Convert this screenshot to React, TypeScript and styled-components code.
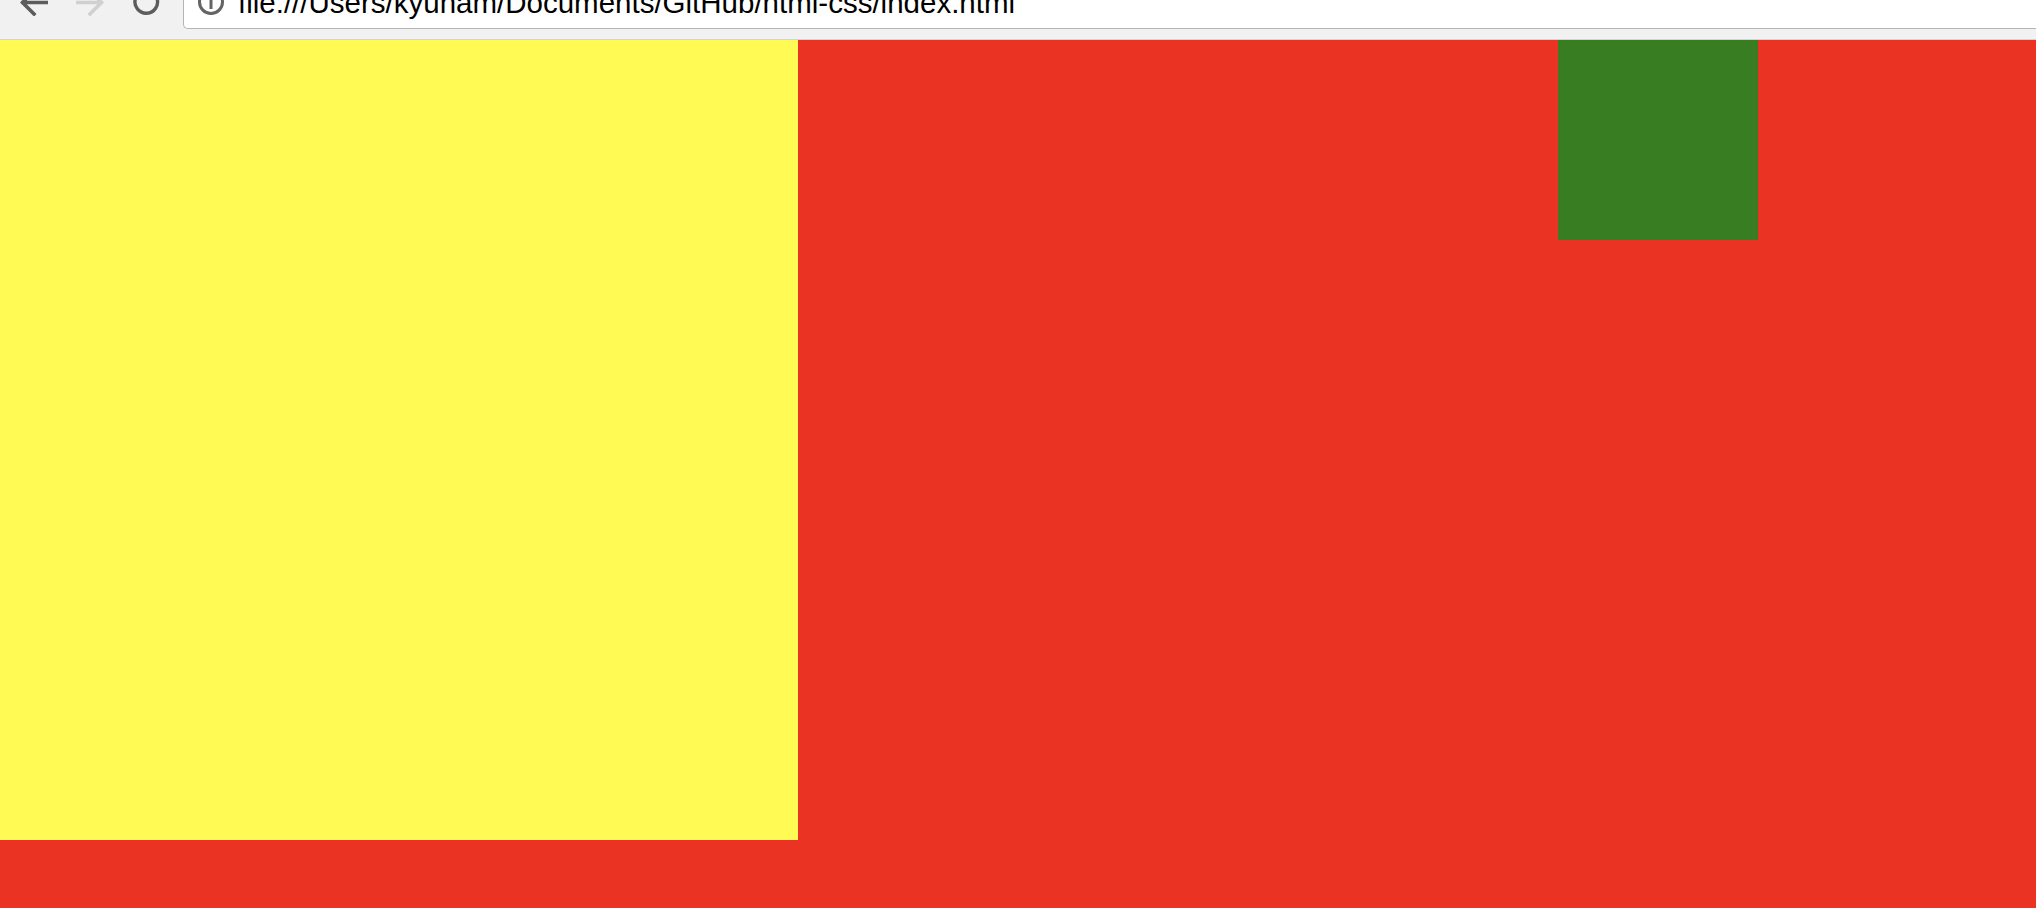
import React from 'react';
import styled, { createGlobalStyle } from 'styled-components';

const GlobalStyle = createGlobalStyle`
  html,
  body {
    margin: 0;
    padding: 0;
    background: #ea3323;
    overflow: hidden;
  }

  #root {
    width: 2036px;
    height: 908px;
  }
`;

const Window = styled.div`
  display: flex;
  flex-direction: column;
  height: 100%;
`;

const Toolbar = styled.header`
  height: 39px;
  flex-shrink: 0;
  overflow: hidden;
  display: flex;
  align-items: flex-end;
  background: #f1f1f1;
  border-bottom: 1px solid #d3d3d3;
`;

const NavRow = styled.div`
  height: 75px;
  flex: 1;
  display: flex;
  align-items: center;
  padding-left: 20px;
`;

const NavButtons = styled.div`
  display: flex;
  align-items: center;
  gap: 28px;
  margin-right: 23px;
`;

const NavIcon = styled.svg<{ $tone: string }>`
  width: 28px;
  height: 28px;
  flex-shrink: 0;
  color: ${(p) => p.$tone};
`;

const UrlBox = styled.div`
  flex: 1;
  height: 55px;
  box-sizing: border-box;
  display: flex;
  align-items: center;
  gap: 13px;
  padding-left: 13px;
  background: #fff;
  border: 1px solid #b4b4b4;
  border-right: none;
  border-radius: 0 0 0 5px;
`;

const UrlText = styled.span`
  margin-top: 3px;
  font-family: 'Liberation Sans', Arial, sans-serif;
  font-size: 29.5px;
  line-height: 34px;
  color: #000;
  white-space: nowrap;
`;

const Page = styled.main`
  flex: 1;
  display: flex;
  align-items: flex-start;
  gap: 760px;
  background: #ea3323;
`;

const Block = styled.div<{ $w: number; $h: number; $color: string }>`
  width: ${(p) => p.$w}px;
  height: ${(p) => p.$h}px;
  flex-shrink: 0;
  background: ${(p) => p.$color};
`;

const BackIcon = ({ tone, flip }: { tone: string; flip?: boolean }) => (
  <NavIcon $tone={tone} viewBox="0 0 28 28" style={flip ? { transform: 'scaleX(-1)' } : undefined}>
    <path
      d="M27 14.5H3M14 3L2.5 14.5L14 26"
      fill="none"
      stroke="currentColor"
      strokeWidth="3.6"
      strokeLinecap="square"
    />
  </NavIcon>
);

const ReloadIcon = () => (
  <NavIcon $tone="#5c5c5c" viewBox="0 0 28 28">
    <path
      d="M24.9 10.2A11.3 11.3 0 1 1 19.8 4.1"
      fill="none"
      stroke="currentColor"
      strokeWidth="3.4"
    />
    <path d="M17 0.5L26 1.5L23 9.5Z" fill="currentColor" />
  </NavIcon>
);

const InfoIcon = () => (
  <NavIcon $tone="#646464" viewBox="0 0 28 28">
    <circle cx="14" cy="14" r="11.5" fill="none" stroke="currentColor" strokeWidth="3" />
    <path d="M14 12V21" stroke="currentColor" strokeWidth="3" />
    <circle cx="14" cy="8.5" r="1.8" fill="currentColor" />
  </NavIcon>
);

const App = () => {
  return (
    <Window>
      <GlobalStyle />
      <Toolbar>
        <NavRow>
          <NavButtons>
            <BackIcon tone="#5c5c5c" />
            <BackIcon tone="#d0d0d0" flip />
            <ReloadIcon />
          </NavButtons>
          <UrlBox>
            <InfoIcon />
            <UrlText>file:///Users/kyunam/Documents/GitHub/html-css/index.html</UrlText>
          </UrlBox>
        </NavRow>
      </Toolbar>
      <Page>
        <Block $w={798} $h={800} $color="#fffb54" />
        <Block $w={200} $h={200} $color="#387d22" />
      </Page>
    </Window>
  );
};

export default App;
